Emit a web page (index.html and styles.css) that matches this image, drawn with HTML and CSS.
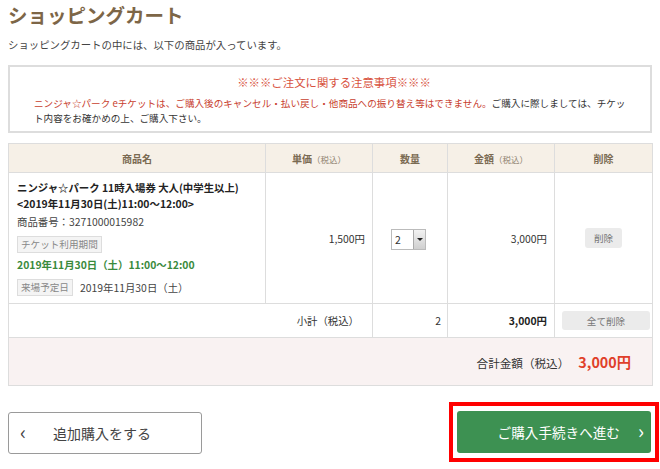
FILE: index.html
```html
<!DOCTYPE html>
<html lang="ja">
<head>
    <meta charset="UTF-8">
    <meta name="viewport" content="width=device-width, initial-scale=1.0">
    <title>ショッピングカート</title>
    <link rel="stylesheet" href="styles.css">
</head>
<body>
    <div class="cart">
        <h1 class="page-title">ショッピングカート</h1>
        <p class="lead">ショッピングカートの中には、以下の商品が入っています。</p>

        <div class="notice">
            <p class="notice-title">※※※ご注文に関する注意事項※※※</p>
            <p class="notice-text"><span class="red">ニンジャ☆パーク eチケットは、ご購入後のキャンセル・払い戻し・他商品への振り替え等はできません。</span>ご購入に際しましては、チケッ<br>ト内容をお確かめの上、ご購入下さい。</p>
        </div>

        <table class="cart-table">
            <colgroup>
                <col class="c-name">
                <col class="c-price">
                <col class="c-qty">
                <col class="c-amount">
                <col class="c-del">
            </colgroup>
            <thead>
                <tr>
                    <th>商品名</th>
                    <th>単価<small>（税込）</small></th>
                    <th>数量</th>
                    <th>金額<small>（税込）</small></th>
                    <th>削除</th>
                </tr>
            </thead>
            <tbody>
                <tr class="item-row">
                    <td class="item">
                        <p class="item-name">ニンジャ☆パーク 11時入場券 大人(中学生以上)<br>&lt;2019年11月30日(土)11:00～12:00&gt;</p>
                        <p class="item-code">商品番号：3271000015982</p>
                        <p class="tag-line"><span class="tag">チケット利用期間</span></p>
                        <p class="item-period">2019年11月30日（土）11:00～12:00</p>
                        <p class="tag-line"><span class="tag">来場予定日</span><span class="visit">2019年11月30日（土）</span></p>
                    </td>
                    <td class="num">1,500円</td>
                    <td class="center">
                        <div class="qty"><span class="qty-val">2</span><span class="qty-btn"></span></div>
                    </td>
                    <td class="num">3,000円</td>
                    <td class="center"><button class="btn-del">削除</button></td>
                </tr>
                <tr class="sub-row">
                    <td colspan="2" class="num">小計（税込）</td>
                    <td class="num">2</td>
                    <td class="num bold">3,000円</td>
                    <td class="del-all"><button class="btn-del all">全て削除</button></td>
                </tr>
                <tr class="total-row">
                    <td colspan="5">合計金額（税込）<strong>3,000円</strong></td>
                </tr>
            </tbody>
        </table>

        <div class="actions">
            <a class="btn-back" href="#"><span class="chev">&lsaquo;</span>追加購入をする</a>
            <div class="next-wrap">
                <a class="btn-next" href="#">ご購入手続きへ進む<span class="chev">&rsaquo;</span></a>
            </div>
        </div>
    </div>
</body>
</html>
```

FILE: styles.css
```css
body {
    margin: 0;
    padding: 3px 8px 0;
    font-family: "Noto Sans CJK JP", "Noto Sans", sans-serif;
    font-size: 10.4px;
    color: #333;
    background: #fff;
}
p { margin: 0; }

.page-title {
    margin: 0;
    font-size: 19.5px;
    line-height: 24px;
    font-weight: bold;
    color: #7d6647;
}
.lead {
    margin-top: 10px;
    line-height: 16px;
    color: #444;
}

.notice {
    margin-top: 12px;
    border: 2px solid #ddd;
    padding: 6px 20px 6px 24px;
    height: 52px;
}
.notice-title {
    text-align: center;
    color: #d8523e;
    font-size: 11.4px;
    line-height: 18px;
    margin-right: -4px;
}
.notice-text {
    margin-top: 5px;
    font-size: 9.6px;
    line-height: 15px;
    color: #333;
}
.notice-text .red { color: #c8402e; }

.cart-table {
    margin-top: 10px;
    width: 644px;
    border-collapse: collapse;
    table-layout: fixed;
    border: 1px solid #ddd;
}
.c-name { width: 257px; }
.c-price { width: 107px; }
.c-qty { width: 75px; }
.c-amount { width: 107px; }
.c-del { width: 98px; }

.cart-table th {
    background: #f6f0e7;
    color: #7a6a52;
    font-weight: bold;
    font-size: 10px;
    height: 28px;
    padding: 0;
    border: 1px solid #ddd;
    border-top: none;
}
.cart-table th small {
    font-size: 8.5px;
    font-weight: normal;
    color: #8e8270;
}
.cart-table td {
    border: 1px solid #ddd;
    padding: 0 7px;
}
.num { text-align: right; }
.center { text-align: center; }
.bold { font-weight: bold; }

.item-row td { height: 130px; }
.cart-table td.item {
    height: 117px;
    padding: 7px 8px 6px;
    vertical-align: top;
}
.item-name {
    font-weight: bold;
    line-height: 15.5px;
    color: #222;
}
.item-code {
    margin-top: 3px;
    line-height: 15px;
    color: #444;
}
.tag-line {
    margin-top: 5px;
    line-height: 17px;
}
.tag {
    display: inline-block;
    padding: 0 3px;
    line-height: 15px;
    border: 1px solid #ddd;
    background: #f4f4f4;
    color: #888;
    font-size: 9.6px;
    vertical-align: middle;
}
.item-period {
    margin-top: 4px;
    line-height: 16px;
    font-weight: bold;
    color: #3a8a3c;
}
.visit {
    margin-left: 7px;
    color: #444;
    vertical-align: middle;
}

.qty {
    display: inline-flex;
    height: 19px;
    border: 1px solid #bbb;
    margin-right: 3px;
    margin-top: 2px;
    vertical-align: middle;
}
.qty-val {
    width: 18px;
    text-align: left;
    padding-left: 3px;
    line-height: 19px;
    font-size: 10.5px;
}
.qty-btn {
    width: 11px;
    border-left: 1px solid #aaa;
    background: linear-gradient(#f2f2f2, #cfcfcf);
    display: flex;
    align-items: center;
    justify-content: center;
}
.qty-btn::after {
    content: "";
    border-left: 3px solid transparent;
    border-right: 3px solid transparent;
    border-top: 3px solid #222;
}

.btn-del {
    font-family: inherit;
    font-size: 9.6px;
    color: #777;
    background: #ebebeb;
    border: none;
    border-radius: 3px;
    width: 37px;
    height: 20px;
    padding: 0;
    cursor: pointer;
}
.cart-table td.del-all {
    padding: 0 0 0 7px;
}
.btn-del.all {
    width: 88px;
    height: 19px;
    display: block;
}

.sub-row td { height: 33px; }
.sub-row td:first-child { padding-right: 13px; }
.sub-row td:nth-child(2) { padding-right: 6px; }
.sub-row .bold { color: #222; }

.total-row td {
    height: 47px;
    background: #f9f2f2;
    text-align: right;
    font-size: 11.6px;
    color: #333;
    padding-right: 21px;
}
.total-row strong {
    margin-left: 9px;
    font-size: 14.3px;
    color: #e0402a;
}

.actions {
    margin-top: 18px;
    display: flex;
    justify-content: space-between;
    align-items: center;
}
.btn-back {
    display: flex;
    align-items: center;
    box-sizing: border-box;
    width: 194px;
    height: 42px;
    border: 1px solid #9a9a9a;
    border-radius: 3px;
    color: #444;
    text-decoration: none;
    font-size: 14px;
    padding-left: 11px;
}
.btn-back .chev {
    font-size: 20px;
    margin-right: 27px;
    line-height: 1;
    margin-top: -3px;
}
.next-wrap {
    border: 4px solid #ff0000;
    padding: 5px 4px;
    margin-right: -7px;
    margin-top: -2px;
}
.btn-next {
    display: flex;
    align-items: center;
    justify-content: flex-end;
    box-sizing: border-box;
    width: 194px;
    height: 42px;
    background: #3d9152;
    border-radius: 3px;
    color: #fff;
    text-decoration: none;
    font-size: 13.6px;
    padding-right: 7px;
}
.btn-next .chev {
    font-size: 20px;
    margin-left: 18px;
    line-height: 1;
    margin-top: -3px;
}
```
